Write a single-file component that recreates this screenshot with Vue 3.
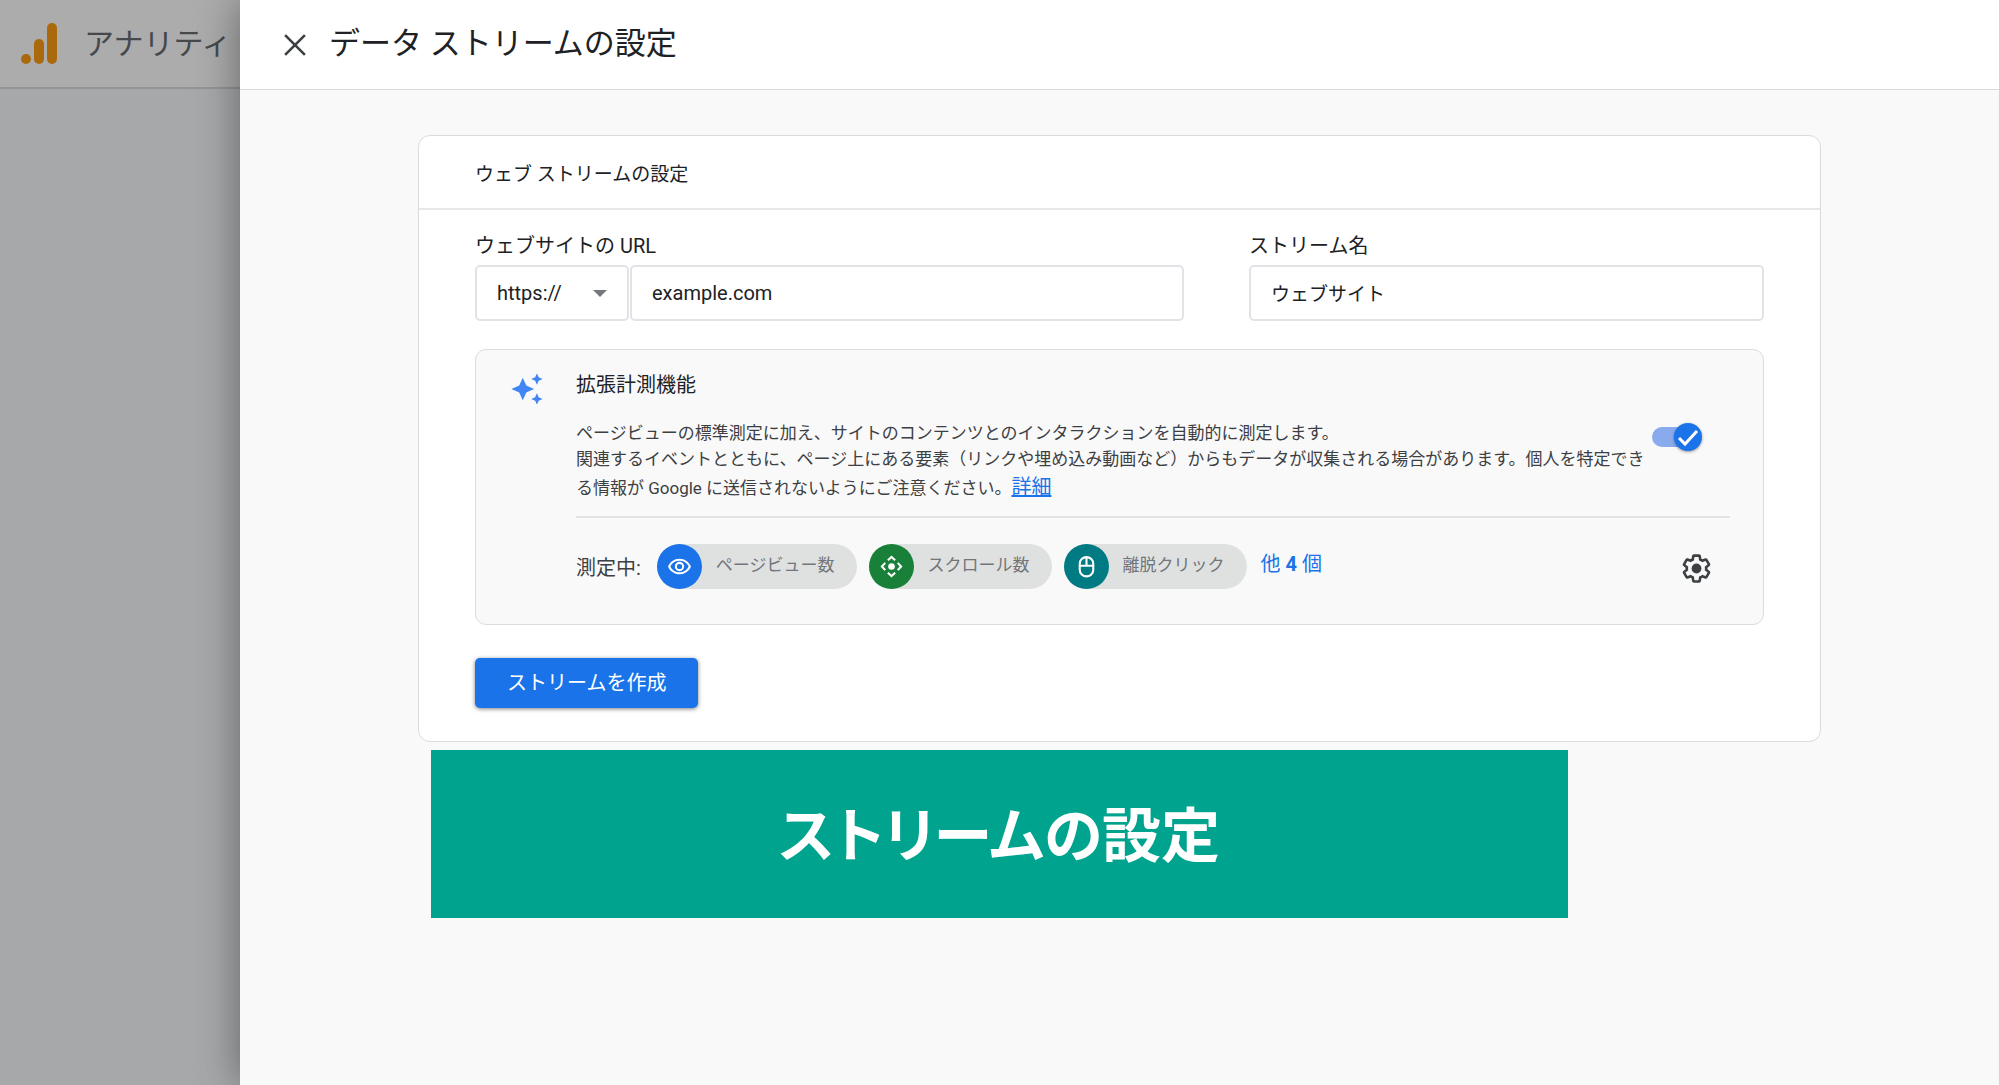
<script setup>
import { ref } from 'vue'

const protocol = ref('https://')
const siteUrl = ref('example.com')
const streamName = ref('ウェブサイト')
const enhanced = ref(true)

const measurements = [
  { id: 'view', label: 'ページビュー数' },
  { id: 'scroll', label: 'スクロール数' },
  { id: 'click', label: '離脱クリック' },
]
</script>

<template>
  <div class="page">
    <div class="backdrop">
      <header class="app-bar">
        <svg class="logo" viewBox="0 0 36 42" aria-hidden="true">
          <circle cx="5" cy="36" r="5" />
          <rect x="13" y="16" width="10" height="25" rx="5" />
          <rect x="26" y="0" width="10" height="41" rx="5" />
        </svg>
        <span class="app-name">アナリティ</span>
      </header>
    </div>

    <main class="panel">
      <header class="panel-bar">
        <button class="close" type="button" aria-label="閉じる">
          <svg viewBox="0 0 20 20" aria-hidden="true">
            <path d="M1 1L19 19M19 1L1 19" />
          </svg>
        </button>
        <h1>データ ストリームの設定</h1>
      </header>

      <section class="card">
        <h2>ウェブ ストリームの設定</h2>
        <form class="card-body" @submit.prevent>
          <div class="fields">
            <div class="field url">
              <label for="site-url">ウェブサイトの URL</label>
              <div class="url-row">
                <div class="select-wrap">
                  <select v-model="protocol" aria-label="プロトコル">
                    <option>https://</option>
                    <option>http://</option>
                  </select>
                  <svg class="caret" viewBox="0 0 14 7" aria-hidden="true"><path d="M0 0H14L7 7Z" /></svg>
                </div>
                <input id="site-url" v-model="siteUrl" type="text" />
              </div>
            </div>
            <div class="field name">
              <label for="stream-name">ストリーム名</label>
              <input id="stream-name" v-model="streamName" type="text" />
            </div>
          </div>

          <section class="enhanced">
            <svg class="sparkle" viewBox="0 0 24 24" aria-hidden="true">
              <path d="M19 9l1.25-2.75L23 5l-2.75-1.25L19 1l-1.25 2.75L15 5l2.75 1.25L19 9zM11.5 9.500L9 4 6.500 9.500 1 12l5.500 2.500L9 20l2.500-5.500L17 12l-5.500-2.500zM19 15l-1.250 2.750L15 19l2.750 1.250L19 23l1.250-2.750L23 19l-2.750-1.250L19 15z" />
            </svg>
            <div class="enhanced-body">
              <h3 id="enhanced-title">拡張計測機能</h3>
              <div class="summary">
                <p>
                  ページビューの標準測定に加え、サイトのコンテンツとのインタラクションを自動的に測定します。<br />関連するイベントとともに、ページ上にある要素（リンクや埋め込み動画など）からもデータが収集される場合があります。個人を特定できる情報が Google に送信されないようにご注意ください。<a href="#">詳細</a>
                </p>
                <label class="toggle">
                  <input v-model="enhanced" type="checkbox" aria-labelledby="enhanced-title" />
                  <span class="knob">
                    <svg viewBox="0 0 28 28" aria-hidden="true"><path d="M5 15L11 21L23 8" /></svg>
                  </span>
                </label>
              </div>
              <div class="measuring">
                <span class="measuring-label">測定中:</span>
                <ul>
                  <li v-for="m in measurements" :key="m.id" class="chip">
                    <span class="disc" :class="m.id">
                      <svg v-if="m.id === 'view'" viewBox="0 0 24 24" aria-hidden="true">
                        <path class="solid" d="M12 6.500a9.770 9.770 0 0 1 8.820 5.500 9.770 9.770 0 0 1-17.640 0A9.770 9.770 0 0 1 12 6.500m0-2C7 4.500 2.730 7.610 1 12c1.730 4.390 6 7.500 11 7.500s9.270-3.110 11-7.500c-1.730-4.390-6-7.500-11-7.500zm0 5a2.500 2.500 0 0 1 0 5 2.500 2.500 0 0 1 0-5m0-2a4.500 4.500 0 1 0 0 9 4.500 4.500 0 0 0 0-9z" />
                      </svg>
                      <svg v-else-if="m.id === 'scroll'" viewBox="0 0 24 24" aria-hidden="true">
                        <circle class="solid" cx="12" cy="12" r="3.200" />
                        <path d="M8.500 6L12 2.800L15.500 6M8.500 18L12 21.200L15.500 18M6 8.500L2.800 12L6 15.500M18 8.500L21.200 12L18 15.500" />
                      </svg>
                      <svg v-else viewBox="0 0 24 24" aria-hidden="true">
                        <rect x="5.500" y="3" width="13" height="18.500" rx="6.500" />
                        <path d="M5.500 11.200H18.500M12 3V11.200" />
                      </svg>
                    </span>
                    <span class="chip-label">{{ m.label }}</span>
                  </li>
                </ul>
                <a class="more" href="#">他 <b>4</b> 個</a>
                <button class="gear" type="button" aria-label="設定">
                  <svg viewBox="0 0 24 24" aria-hidden="true">
                    <path d="M19.430 12.980c.04-.32.07-.64.07-.98 0-.34-.03-.66-.07-.98l2.110-1.650c.19-.15.24-.42.12-.64l-2-3.460a.5.5 0 0 0-.61-.22l-2.490 1c-.52-.4-1.080-.73-1.690-.98l-.38-2.650A.488.488 0 0 0 14 2h-4c-.25 0-.46.18-.49.42l-.38 2.650c-.61.25-1.170.59-1.690.98l-2.490-1a.5.5 0 0 0-.61.22l-2 3.460c-.13.22-.07.49.12.64l2.110 1.650c-.04.32-.07.65-.07.98 0 .33.03.66.07.98l-2.110 1.650c-.19.15-.24.42-.12.64l2 3.460a.5.5 0 0 0 .61.22l2.490-1c.52.4 1.080.73 1.690.98l.38 2.650c.03.24.24.42.49.42h4c.25 0 .46-.18.49-.42l.38-2.650c.61-.25 1.170-.59 1.690-.98l2.490 1a.5.5 0 0 0 .61-.22l2-3.460c.12-.22.07-.49-.12-.64l-2.110-1.650z" />
                    <circle cx="12" cy="12" r="3.800" />
                  </svg>
                </button>
              </div>
            </div>
          </section>

          <button class="create" type="submit">ストリームを作成</button>
        </form>
      </section>

      <p class="caption">ストリームの設定</p>
    </main>
  </div>
</template>

<style>
body {
  margin: 0;
}
</style>

<style scoped>
.page {
  display: flex;
  min-height: 100vh;
  background: #a7a8aa;
  color: #202124;
  font-family: Roboto, "Noto Sans CJK JP", sans-serif;
  font-size: 20px;
  font-weight: 400;
}

.page *,
.page *::before {
  box-sizing: border-box;
}

h1,
h2,
h3,
p,
ul {
  margin: 0;
  padding: 0;
  font-weight: inherit;
}

button,
input,
select {
  margin: 0;
  color: inherit;
  font: inherit;
}

.backdrop {
  flex: 0 0 240px;
  width: 240px;
  overflow: hidden;
}

.app-bar {
  display: flex;
  align-items: center;
  height: 89px;
  padding-left: 21px;
  border-bottom: 2px solid #949496;
  background: #acacac;
}

.logo {
  flex: none;
  width: 36px;
  height: 42px;
  fill: #a9690c;
}

.app-name {
  margin-left: 27px;
  color: #46494c;
  font-size: 30px;
  line-height: 44px;
  white-space: nowrap;
}

.panel {
  position: relative;
  flex: 1;
  min-width: 0;
  background: #f9f9f9;
  box-shadow: 0 0 40px rgba(0, 0, 0, 0.42);
}

.panel-bar {
  display: flex;
  align-items: center;
  height: 90px;
  padding: 0 44px;
  border-bottom: 1px solid #d8d9dc;
  background: #fff;
}

.close {
  display: flex;
  padding: 0;
  border: 0;
  background: none;
}

.close svg {
  width: 22px;
  height: 22px;
  fill: none;
  stroke: #3c4043;
  stroke-width: 2.4;
}

h1 {
  margin-left: 23px;
  padding-bottom: 2px;
  font-size: 31px;
  line-height: 46px;
}

.card {
  margin: 45px 178px 0;
  border: 1px solid #d9dbde;
  border-radius: 12px;
  background: #fff;
}

h2 {
  padding: 24px 56px 19px;
  border-bottom: 2px solid #e6e7e9;
  font-size: 19px;
  line-height: 29px;
}

.card-body {
  padding: 21px 56px 33px;
}

.fields {
  display: flex;
  gap: 65px;
}

.field {
  min-width: 0;
}

.url {
  flex: 709;
}

.name {
  flex: 515;
}

.field label {
  display: block;
  line-height: 30px;
  margin-bottom: 4px;
}

.url-row {
  display: flex;
  gap: 1px;
}

.select-wrap {
  position: relative;
  flex: 0 0 154px;
}

.field input,
.field select {
  width: 100%;
  height: 56px;
  padding: 0 20px;
  border: 2px solid #e1e3e6;
  border-radius: 5px;
  background: #fff;
  appearance: none;
  outline: none;
}

.name input {
  padding-bottom: 2px;
  font-size: 19px;
}

.caret {
  position: absolute;
  top: 25px;
  right: 22px;
  width: 14px;
  height: 7px;
  fill: #74777b;
  pointer-events: none;
}

.enhanced {
  display: flex;
  margin-top: 28px;
  padding: 20px 33px 35px 34px;
  border: 1px solid #dadcdf;
  border-radius: 11px;
  background: #f9f9f9;
}

.sparkle {
  flex: none;
  width: 34px;
  height: 34px;
  margin-top: 2px;
  fill: #4285f4;
}

.enhanced-body {
  flex: 1;
  min-width: 0;
  margin-left: 32px;
}

h3 {
  font-size: 20px;
  line-height: 30px;
}

.summary {
  display: flex;
  padding: 20px 28px 14px 0;
  border-bottom: 2px solid #e2e3e6;
}

.summary p {
  flex: 1;
  color: #3c4043;
  font-size: 17px;
  line-height: 26px;
}

.summary a {
  color: #1a73e8;
  font-size: 20px;
  line-height: 30px;
}

.toggle {
  position: relative;
  flex: none;
  width: 50px;
  height: 28px;
  margin-top: 3px;
}

.toggle input {
  display: block;
  width: 40px;
  height: 20px;
  margin: 4px 0;
  border-radius: 10px;
  background: #8aaaee;
  appearance: none;
}

.knob {
  position: absolute;
  top: 0;
  right: 0;
  width: 28px;
  height: 28px;
  border-radius: 50%;
  background: #1a73e8;
  box-shadow: 0 1px 3px rgba(0, 0, 0, 0.4);
}

.knob svg {
  display: block;
  fill: none;
  stroke: #fff;
  stroke-width: 3;
}

.measuring {
  display: flex;
  align-items: center;
  padding: 26px 18px 0 0;
}

.measuring-label {
  color: #3c4043;
}

.measuring ul {
  display: flex;
  gap: 12px;
  margin-left: 16px;
  list-style: none;
}

.chip {
  display: flex;
  align-items: center;
  height: 45px;
  padding-right: 22px;
  border-radius: 23px;
  background: #dfe1e0;
  color: #72757a;
  font-size: 17px;
}

.chip-label {
  line-height: 26px;
  padding-bottom: 3px;
}

.disc {
  display: flex;
  align-items: center;
  justify-content: center;
  width: 45px;
  height: 45px;
  margin-right: 14px;
  border-radius: 50%;
}

.disc svg {
  width: 25px;
  height: 25px;
  fill: none;
  stroke: #fff;
  stroke-width: 2;
}

.disc .solid {
  fill: #fff;
  stroke: none;
}

.view {
  background: #1a73e8;
}

.scroll {
  background: #188038;
}

.click {
  background: #007b83;
}

.more {
  margin-left: 14px;
  padding-bottom: 8px;
  color: #1a73e8;
  text-decoration: none;
}

.more b {
  font-weight: 700;
}

.gear {
  display: flex;
  margin-left: auto;
  padding: 3px 0 0;
  border: 0;
  background: none;
}

.gear svg {
  width: 31px;
  height: 31px;
}

.gear path {
  fill: none;
  stroke: #3c4043;
  stroke-width: 2;
}

.gear circle {
  fill: #3c4043;
}

.create {
  display: block;
  height: 50px;
  margin-top: 33px;
  padding: 0 32px 3px;
  border: 0;
  border-radius: 5px;
  background: #1a73e8;
  box-shadow: 0 1px 4px rgba(0, 0, 0, 0.5);
  color: #fff;
}

.caption {
  margin: 8px 431px 0 191px;
  padding: 43px 0 37px;
  background: #00a48e;
  color: #fff;
  font-size: 59px;
  font-weight: 700;
  font-feature-settings: "palt";
  line-height: 88px;
  text-align: center;
}
</style>
